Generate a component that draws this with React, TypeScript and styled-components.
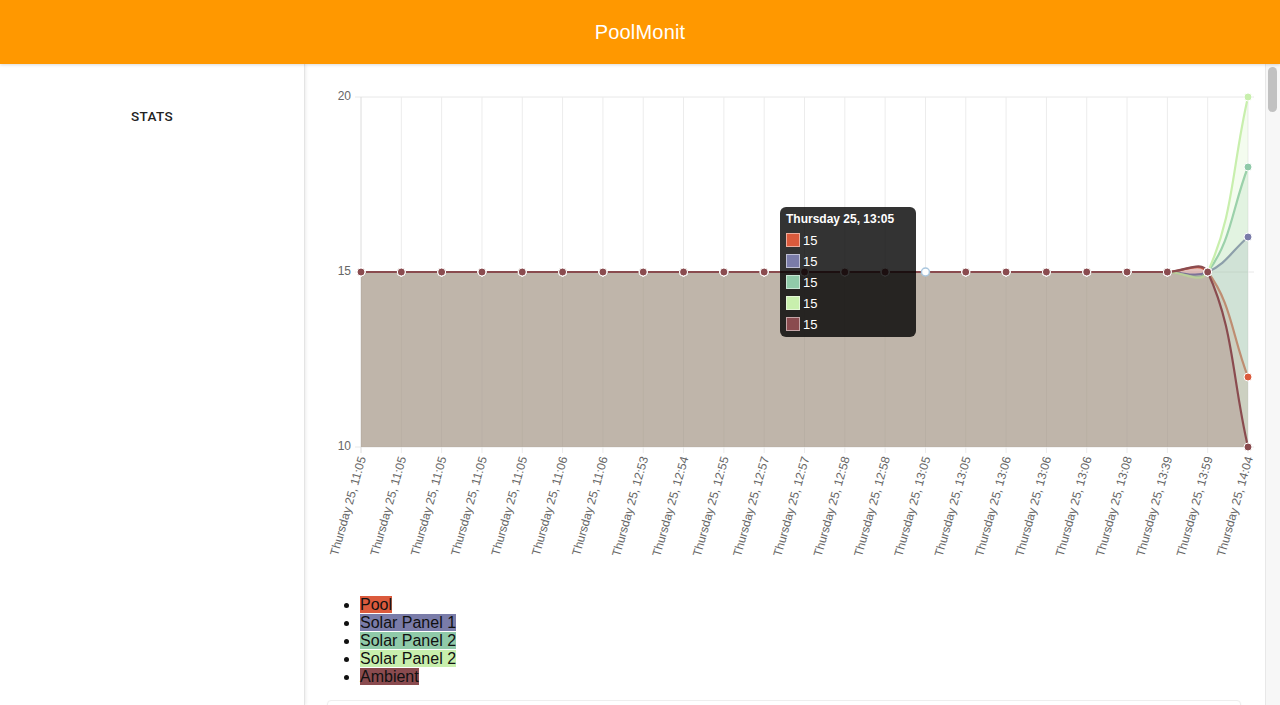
import React from 'react';
import styled, { createGlobalStyle } from 'styled-components';

const GlobalStyle = createGlobalStyle`
  html, body {
    margin: 0;
    padding: 0;
    background: #fff;
    font-family: 'Liberation Sans', Arial, Helvetica, sans-serif;
  }
`;

interface Series {
  name: string;
  color: string;
  last: number;
}

const SERIES: Series[] = [
  { name: 'Pool', color: '#db5a3c', last: 12 },
  { name: 'Solar Panel 1', color: '#7a7ca9', last: 16 },
  { name: 'Solar Panel 2', color: '#90caa9', last: 18 },
  { name: 'Solar Panel 2', color: '#c8efad', last: 20 },
  { name: 'Ambient', color: '#8a4b4f', last: 10 },
];

const TIMES = [
  '11:05', '11:05', '11:05', '11:05', '11:05', '11:06', '11:06', '12:53',
  '12:54', '12:55', '12:57', '12:57', '12:58', '12:58', '13:05', '13:05',
  '13:06', '13:06', '13:06', '13:08', '13:39', '13:59', '14:04',
];

// chart geometry, relative to the svg origin
const W = 944;
const H = 500;
const LEFT = 45;
const RIGHT = 932;
const TOP = 20;
const BOTTOM = 370;
const MIN = 10;
const MAX = 20;
const HOVER = 14;

const xAt = (i: number) => LEFT + (i * (RIGHT - LEFT)) / (TIMES.length - 1);
const yAt = (v: number) => BOTTOM - ((v - MIN) / (MAX - MIN)) * (BOTTOM - TOP);

type Pt = { x: number; y: number };

const clampY = (y: number) => Math.max(TOP, Math.min(BOTTOM, y));

// same bezier smoothing chart.js uses (tension 0.4)
const linePath = (pts: Pt[], t = 0.4) => {
  const cps = pts.map((cur, i) => {
    const prev = pts[i - 1] || cur;
    const next = pts[i + 1] || cur;
    const d01 = Math.hypot(cur.x - prev.x, cur.y - prev.y);
    const d12 = Math.hypot(next.x - cur.x, next.y - cur.y);
    let s01 = d01 / (d01 + d12);
    let s12 = d12 / (d01 + d12);
    if (isNaN(s01)) s01 = 0;
    if (isNaN(s12)) s12 = 0;
    const fa = t * s01;
    const fb = t * s12;
    return {
      p: { x: cur.x - fa * (next.x - prev.x), y: clampY(cur.y - fa * (next.y - prev.y)) },
      n: { x: cur.x + fb * (next.x - prev.x), y: clampY(cur.y + fb * (next.y - prev.y)) },
    };
  });
  let d = `M${pts[0].x} ${pts[0].y}`;
  for (let i = 1; i < pts.length; i++) {
    const a = cps[i - 1].n;
    const b = cps[i].p;
    d += ` C${a.x} ${a.y} ${b.x} ${b.y} ${pts[i].x} ${pts[i].y}`;
  }
  return d;
};

const seriesPoints = (s: Series): Pt[] =>
  TIMES.map((_, i) => ({ x: xAt(i), y: yAt(i === TIMES.length - 1 ? s.last : 15) }));

const App = () => (
  <Page>
    <GlobalStyle />
    <Header>
      <Title>PoolMonit</Title>
    </Header>
    <Body>
      <Sidebar>
        <NavItem>STATS</NavItem>
      </Sidebar>
      <Main>
        <ChartWrap>
          <svg width={W} height={H} viewBox={`0 0 ${W} ${H}`}>
            {/* grid */}
            {[20, 15, 10].map(v => (
              <line key={v} x1={LEFT - 6} x2={RIGHT + 6} y1={yAt(v)} y2={yAt(v)} stroke="#e8e8e8" strokeWidth={1} />
            ))}
            {TIMES.map((_, i) => (
              <line
                key={i}
                x1={xAt(i)}
                x2={xAt(i)}
                y1={TOP}
                y2={BOTTOM + 6}
                stroke={i === 0 ? '#dcdcdc' : '#ececec'}
                strokeWidth={1}
              />
            ))}
            {[20, 15, 10].map(v => (
              <AxisText key={v} x={LEFT - 10} y={yAt(v)} textAnchor="end" dominantBaseline="middle">
                {v}
              </AxisText>
            ))}
            {TIMES.map((tm, i) => (
              <AxisText
                key={i}
                textAnchor="end"
                dominantBaseline="middle"
                transform={`translate(${xAt(i) + 2} ${BOTTOM + 10}) rotate(-74)`}
              >
                {`Thursday 25, ${tm}`}
              </AxisText>
            ))}

            {/* datasets */}
            {SERIES.map((s, k) => {
              const pts = seriesPoints(s);
              const d = linePath(pts);
              return (
                <g key={k}>
                  <path d={`${d} L${RIGHT} ${BOTTOM} L${LEFT} ${BOTTOM} Z`} fill={s.color} fillOpacity={0.2} />
                  <path d={d} fill="none" stroke={s.color} strokeWidth={2.2} />
                </g>
              );
            })}
            {SERIES.map((s, k) =>
              seriesPoints(s).map((p, i) =>
                i === HOVER ? null : (
                  <circle key={`${k}-${i}`} cx={p.x} cy={p.y} r={4} fill={s.color} stroke="#fff" strokeWidth={1} />
                )
              )
            )}
            <circle cx={xAt(HOVER)} cy={yAt(15)} r={4} fill="#fff" stroke="#a9c6de" strokeWidth={1.5} />
          </svg>

          <Tooltip>
            <TipTitle>Thursday 25, 13:05</TipTitle>
            {SERIES.map((s, k) => (
              <TipRow key={k}>
                <TipSwatch color={s.color} />
                <span>15</span>
              </TipRow>
            ))}
          </Tooltip>
        </ChartWrap>

        <Legend>
          {SERIES.map((s, k) => (
            <li key={k}>
              <LegendLabel color={s.color}>{s.name}</LegendLabel>
            </li>
          ))}
        </Legend>

        <Card />
      </Main>
      <Scrollbar>
        <Thumb />
      </Scrollbar>
    </Body>
  </Page>
);

const Page = styled.div`
  width: 1280px;
  height: 705px;
  overflow: hidden;
  display: flex;
  flex-direction: column;
`;

const Header = styled.header`
  height: 64px;
  flex: 0 0 64px;
  background-color: #ff9800;
  display: flex;
  align-items: center;
  justify-content: center;
  box-shadow: 0 1px 3px rgba(0, 0, 0, 0.15);
  position: relative;
  z-index: 2;
`;

const Title = styled.h1`
  margin: 0;
  color: #fff;
  font-size: 20px;
  font-weight: 400;
  letter-spacing: 0.2px;
`;

const Body = styled.div`
  flex: 1;
  display: flex;
  min-height: 0;
`;

const Sidebar = styled.aside`
  width: 305px;
  flex: 0 0 305px;
  border-right: 1px solid #e4e4e4;
  box-shadow: 1px 0 3px rgba(0, 0, 0, 0.08);
  padding-top: 44px;
  box-sizing: border-box;
  position: relative;
  z-index: 1;
`;

const NavItem = styled.div`
  text-align: center;
  font-family: Roboto, 'Liberation Sans', Arial, sans-serif;
  font-size: 13.5px;
  font-weight: 500;
  letter-spacing: 0.4px;
  color: #222;
`;

const Main = styled.main`
  flex: 1;
  min-width: 0;
  padding: 13px 0 0 11px;
  box-sizing: border-box;
`;

const ChartWrap = styled.div`
  position: relative;
  width: ${W}px;
  height: ${H}px;

  svg {
    display: block;
  }
`;

const AxisText = styled.text`
  font-family: 'Liberation Sans', Arial, Helvetica, sans-serif;
  font-size: 12px;
  fill: #666;
`;

const Tooltip = styled.div`
  position: absolute;
  left: 464px;
  top: 130px;
  width: 136px;
  height: 130px;
  box-sizing: border-box;
  padding: 6px;
  border-radius: 6px;
  background: rgba(0, 0, 0, 0.8);
  color: #fff;
`;

const TipTitle = styled.div`
  font-size: 12px;
  font-weight: 700;
  line-height: 13px;
  margin-bottom: 7px;
`;

const TipRow = styled.div`
  display: flex;
  align-items: center;
  gap: 3px;
  height: 14px;
  margin-bottom: 7px;
  font-size: 13px;
`;

const TipSwatch = styled.span<{ color: string }>`
  width: 14px;
  height: 14px;
  box-sizing: border-box;
  background: ${p => p.color};
  border: 1px solid rgba(255, 255, 255, 0.5);
`;

const Legend = styled.ul`
  margin: 19px 0 0 4px;
  padding-left: 40px;
  font-size: 16px;
  line-height: 18px;
  color: #111;
`;

const LegendLabel = styled.span<{ color: string }>`
  background-color: ${p => p.color};
`;

const Card = styled.div`
  margin: 14px 24px 0 11px;
  height: 200px;
  border: 1px solid #eee;
  border-radius: 4px;
  box-shadow: 0 1px 2px rgba(0, 0, 0, 0.05);
`;

const Scrollbar = styled.div`
  width: 15px;
  flex: 0 0 15px;
  background: #f7f7f7;
  border-left: 1px solid #e8e8e8;
  box-sizing: border-box;
  padding: 3px 2px 0 2px;
`;

const Thumb = styled.div`
  width: 9px;
  height: 45px;
  border-radius: 5px;
  background: #c1c1c1;
`;

export default App;
